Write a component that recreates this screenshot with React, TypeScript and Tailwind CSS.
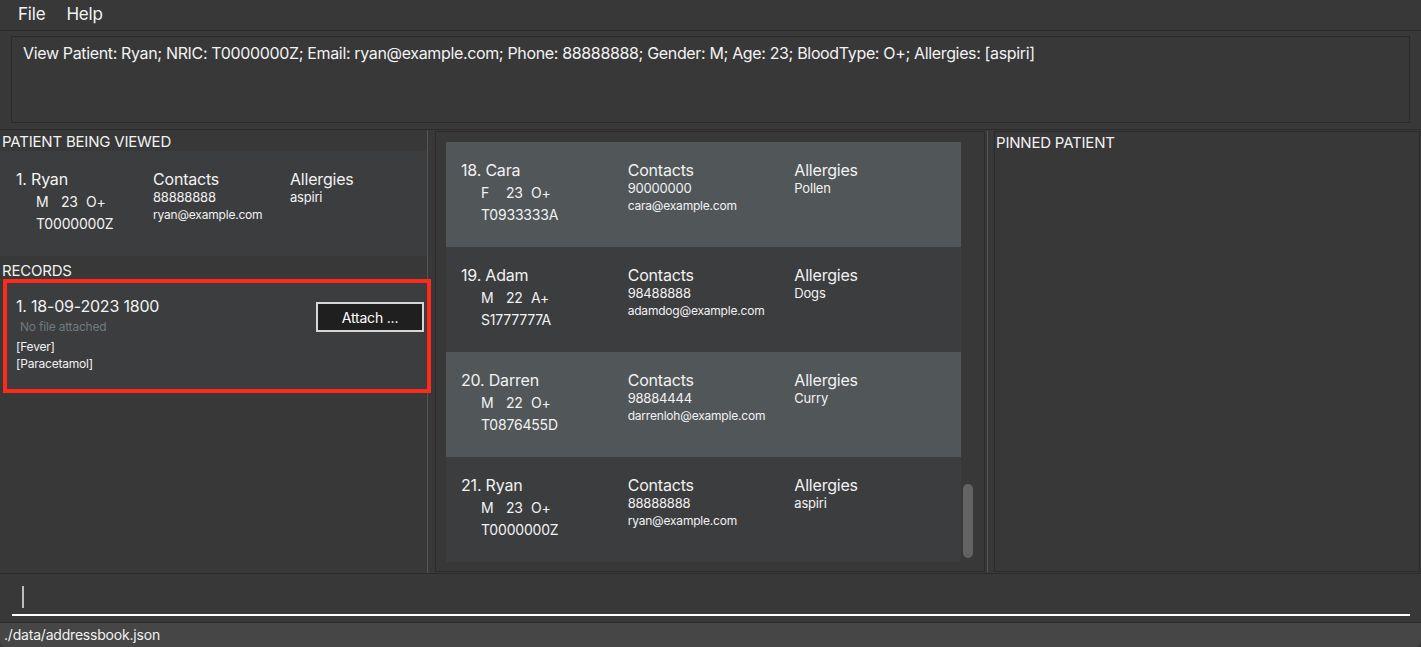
import React from 'react';

interface Patient {
  index: number;
  name: string;
  gender: string;
  age: number;
  bloodType: string;
  nric: string;
  phone: string;
  email: string;
  allergies: string;
}

const patients: Patient[] = [
  { index: 18, name: 'Cara', gender: 'F', age: 23, bloodType: 'O+', nric: 'T0933333A', phone: '90000000', email: 'cara@example.com', allergies: 'Pollen' },
  { index: 19, name: 'Adam', gender: 'M', age: 22, bloodType: 'A+', nric: 'S1777777A', phone: '98488888', email: 'adamdog@example.com', allergies: 'Dogs' },
  { index: 20, name: 'Darren', gender: 'M', age: 22, bloodType: 'O+', nric: 'T0876455D', phone: '98884444', email: 'darrenloh@example.com', allergies: 'Curry' },
  { index: 21, name: 'Ryan', gender: 'M', age: 23, bloodType: 'O+', nric: 'T0000000Z', phone: '88888888', email: 'ryan@example.com', allergies: 'aspiri' },
];

const viewed: Patient = patients[3];

const PatientCard = ({ patient, shown, bg, pad }: { patient: Patient; shown: number; bg: string; pad: string }) => (
  <div className={`h-[105px] grid grid-cols-3 pt-[17px] ${pad} ${bg}`}>
    <div>
      <div className="text-[16px] leading-[22px]">{shown}. {patient.name}</div>
      <div className="pl-[20px] text-[14px] leading-[23px] flex">
        <span className="w-[25px]">{patient.gender}</span>
        <span className="w-[25px]">{patient.age}</span>
        <span>{patient.bloodType}</span>
      </div>
      <div className="pl-[20px] text-[14px] leading-[22px]">{patient.nric}</div>
    </div>
    <div>
      <div className="text-[16px] leading-[22px]">Contacts</div>
      <div className="text-[13px] leading-[15px]">{patient.phone}</div>
      <div className="text-[12px] leading-[19px]">{patient.email}</div>
    </div>
    <div>
      <div className="text-[16px] leading-[22px]">Allergies</div>
      <div className="text-[13px] leading-[15px]">{patient.allergies}</div>
    </div>
  </div>
);

const App = () => {
  return (
    <div className="w-[1421px] h-[647px] bg-[#383838] text-[#f2f2f2] flex flex-col overflow-hidden font-['Inter',sans-serif] tracking-[-0.2px]">
      {/* menu bar */}
      <div className="h-[31px] shrink-0 flex items-center gap-[21px] px-[18px] text-[17px] border-b border-[#2c2c2c]">
        <span>File</span>
        <span>Help</span>
      </div>

      {/* result display */}
      <div className="h-[99px] shrink-0 px-[11px] pt-[5px] pb-[6px] border-b border-[#2c2c2c]">
        <div className="h-full border border-[#2a2a2a] px-[11px] pt-[5px] text-[16px] leading-[22px] tracking-[-0.35px]">
          View Patient: Ryan; NRIC: T0000000Z; Email: ryan@example.com; Phone: 88888888; Gender: M; Age: 23; BloodType: O+; Allergies: [aspiri]
        </div>
      </div>

      {/* main area */}
      <div className="flex-1 flex min-h-0">
        {/* left column */}
        <div className="w-[428px] shrink-0 border-r border-[#545454] flex flex-col">
          <div className="h-[21px] pl-[2px] pt-[2px] text-[15px] leading-[19px]">PATIENT BEING VIEWED</div>
          <PatientCard patient={viewed} shown={1} bg="bg-[#3c3d3f]" pad="pl-[16px]" />
          <div className="h-[23px] pl-[2px] pt-[5px] text-[15px] leading-[19px]">RECORDS</div>
          <div className="ml-[3px] w-[428px] h-[114px] border-[4px] border-[#ff2a1a] bg-[#3c3d3f] -mr-[3px]">
            <div className="flex justify-between pl-[9px] pr-[3px] pt-[13px]">
              <div>
                <div className="text-[16px] leading-[20px]">1. 18-09-2023 1800</div>
                <div className="pl-[4px] text-[12px] leading-[22px] text-[#6c7b80]">No file attached</div>
                <div className="text-[12px] leading-[17px]">[Fever]</div>
                <div className="text-[12px] leading-[17px]">[Paracetamol]</div>
              </div>
              <button className="mt-[6px] w-[108px] h-[30px] bg-[#1f1f1f] border-2 border-[#d6d6d6] text-[14px] text-white">
                Attach ...
              </button>
            </div>
          </div>
        </div>

        {/* patient list */}
        <div className="flex-1 flex pl-[7px] pr-[1px] pt-[1px] pb-[1px]">
          <div className="w-[550px] shrink-0 border border-[#2b2b2b] pl-[10px] pt-[10px] flex">
            <div className="w-[515px]">
              {patients.map((p, i) => (
                <PatientCard
                  key={p.index}
                  patient={p}
                  shown={p.index}
                  bg={i % 2 === 0 ? 'bg-[#515759]' : 'bg-[#3c3d3f]'}
                  pad="pl-[15px]"
                />
              ))}
            </div>
            <div className="flex-1 pl-[2px]">
              <div className="mt-[342px] w-[10px] h-[74px] rounded-[5px] bg-[#636363]" />
            </div>
          </div>
          <div className="ml-[2px] w-[1px] bg-[#545454]" />
          <div className="ml-[6px] flex-1 border border-[#2b2b2b] pl-[1px] pt-[1px] text-[15px] leading-[19px]">
            PINNED PATIENT
          </div>
        </div>
      </div>

      {/* command box */}
      <div className="h-[49px] shrink-0 border-t border-[#2c2c2c] px-[12px] pt-[12px]">
        <div className="h-[30px] border-b-2 border-white pl-[10px] w-[1398px]">
          <div className="w-[2px] h-[22px] bg-[#bdbdbd]" />
        </div>
      </div>

      {/* status bar */}
      <div className="h-[25px] shrink-0 bg-[#464646] border-t border-[#2c2c2c] pl-[4px] text-[14px] leading-[24px] rounded-b-[6px]">
        ./data/addressbook.json
      </div>
    </div>
  );
};

export default App;
